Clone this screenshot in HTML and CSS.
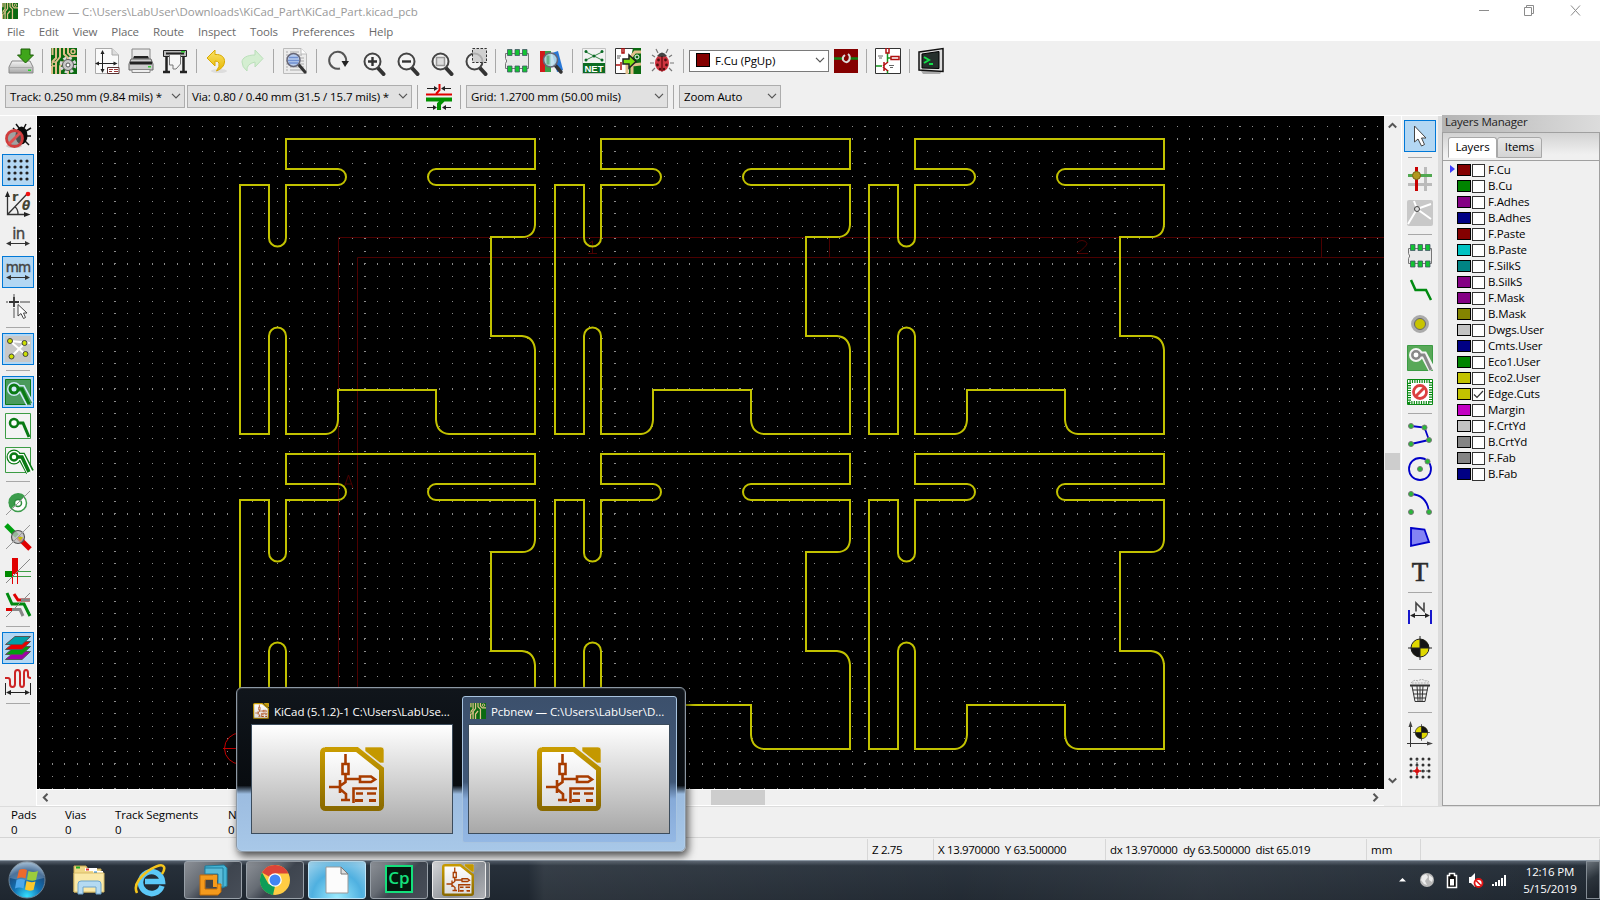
FILE: index.html
```
<!DOCTYPE html>
<html lang="en">
<head>
<meta charset="utf-8">
<title>Pcbnew</title>
<link rel="stylesheet" href="styles.css">
</head>
<body>
<svg class="defs" width="0" height="0">
  <defs>
    <linearGradient id="gold" x1="0" y1="0" x2="0" y2="1"><stop offset="0" stop-color="#c99c00"/><stop offset="1" stop-color="#8a6a00"/></linearGradient>
    <linearGradient id="paper" x1="0" y1="0" x2="0" y2="1"><stop offset="0" stop-color="#fff"/><stop offset="1" stop-color="#dcdcdc"/></linearGradient>
    <linearGradient id="metal" x1="0" y1="0" x2="0" y2="1"><stop offset="0" stop-color="#f4f4f4"/><stop offset="1" stop-color="#a8a8a8"/></linearGradient>
    <linearGradient id="yel" x1="0" y1="0" x2="0" y2="1"><stop offset="0" stop-color="#f9e26a"/><stop offset="1" stop-color="#e8b800"/></linearGradient>
    <radialGradient id="orb" cx=".5" cy=".95" r=".95"><stop offset="0" stop-color="#35e0ff"/><stop offset=".4" stop-color="#1272b4"/><stop offset=".75" stop-color="#1c4a7c"/><stop offset="1" stop-color="#8fb0cc"/></radialGradient>
    <symbol id="kicad" viewBox="0 0 64 64">
      <path d="M5 2.500H37L61.500 22V58.500a3 3 0 0 1-3 3H5.500a3 3 0 0 1-3-3V5.500a3 3 0 0 1 3-3z" fill="url(#paper)" stroke="url(#gold)" stroke-width="5"/>
      <path d="M45 0H61q3 0 3 3V16H60L45 4z" fill="#c49800" stroke="#f4f4f4" stroke-width=".6"/>
      <g fill="none" stroke="#a83c00" stroke-width="2.600"><path d="M25.500 7V16M25.500 28V35L20 39M25.500 32H40M9 40H19M20 33V46M20 42L26 47V53M21 53H30"/><path d="M22.500 17H28.500V27H22.500zM40 29.500H51L55 32.500L51 35H40z"/><path d="M33.500 56V41.500H57M36 46.500H43M47 46.500H56M36 53.500H43M50 53.500H56"/></g>
      <path d="M35 52h8v3h-8zM49 52h7v3h-7z" fill="#a83c00"/>
    </symbol>
    <symbol id="pcb" viewBox="0 0 26 26">
      <path d="M0 0H26V26H0z" fill="#0b6a12"/>
      <g fill="none" stroke="#e2c08c" stroke-width="2"><path d="M1.500 0V7M5 0V10L1 14M9 0V9L5 14V26M13 0V6L17 10V26M17 0V5L20 8H26M9 26V18L13 13M1 18V26"/></g>
      <circle cx="22" cy="3.500" r="2" fill="none" stroke="#e2c08c" stroke-width="1.500"/><circle cx="3" cy="16" r="2" fill="none" stroke="#e2c08c" stroke-width="1.500"/>
    </symbol>
    <symbol id="mag" viewBox="0 0 26 26">
      <path d="M16.500 17.500L22.500 24" stroke="#333" stroke-width="4" stroke-linecap="round"/>
      <circle cx="11.500" cy="11.500" r="8" fill="#f4f4f4" stroke="#444" stroke-width="2"/>
    </symbol>
    <symbol id="chev" viewBox="0 0 10 6"><path d="M1 .8L5 4.800L9 .8" fill="none" stroke="#555" stroke-width="1.200"/></symbol>
    <symbol id="chip" viewBox="0 0 26 26">
      <path d="M1.500 5.500H24.500V20.500H1.500V15.500Q4 13 1.500 10.500z" fill="#e9e9e9" stroke="#777"/>
      <g fill="#12c432" stroke="#456" stroke-width=".8"><path d="M3.500 1.500h4.500v6h-4.500zM11 1.500h4.500v6h-4.500zM18.500 1.500h4.500v6h-4.500zM3.500 18h4.500v6h-4.500zM11 18h4.500v6h-4.500zM18.500 18h4.500v6h-4.500z"/></g>
    </symbol>
    <symbol id="sch" viewBox="0 0 26 26">
      <path d="M.5.5H25.500V25.500H.5z" fill="#fff" stroke="#333"/>
      <g fill="none" stroke-width="1.500"><path d="M12.500 5V14M12.500 10H16M1 18H7M12.500 22V25.500" stroke="#12951c"/><path d="M11 0V5H14V0M16 8.500H24V11.500H16zM9 14V23M8 18L13 14M8 19L13 23" stroke="#b01010"/><path d="M3 8H8M4 10H7M14 17.500H19M15 19.500H18" stroke="#666" stroke-width="1"/></g>
    </symbol>
    <symbol id="fiducial" viewBox="0 0 26 26">
      <circle cx="13" cy="13" r="9" fill="#e0d800" stroke="#222"/><path d="M13 13V4a9 9 0 0 1 9 9zM13 13V22a9 9 0 0 1-9-9z" fill="#151515"/><path d="M13 1V25M1 13H25" stroke="#222"/>
    </symbol>
    <pattern id="dots" x="114" y="138" width="25" height="25" patternUnits="userSpaceOnUse"><path d="M0 0h1v1h-1zM13 0h1v1h-1zM0 13h1v1h-1zM13 13h1v1h-1z" fill="#8b8b8b"/></pattern>
    <pattern id="dotcols" x="114" y="138" width="125" height="25" patternUnits="userSpaceOnUse"><path d="M0 0h2v1h-2zM0 13h2v1h-2z" fill="#8b8b8b"/></pattern>
    <pattern id="dotrows" x="114" y="138" width="25" height="125" patternUnits="userSpaceOnUse"><path d="M0 0h1v2h-1zM13 0h1v2h-1z" fill="#8b8b8b"/></pattern>
    <path id="board" d="M286 139H535V169H436A8 8 0 0 0 436 185H535V225Q534 237 522 237H491V336H522Q534 337 535 350V434H449Q437 433 436 420V390H338V420Q337 433 326 434H286V336A8.500 8.500 0 0 0 269 336V434H240V185H269V238A8.500 8.500 0 0 0 286 238V185H338A8 8 0 0 0 338 169H286z"/>
  </defs>
</svg>

<div class="window">
  <header class="titlebar">
    <svg class="app-icon" width="16" height="16"><use href="#pcb"/></svg>
    <span class="caption">Pcbnew — C:\Users\LabUser\Downloads\KiCad_Part\KiCad_Part.kicad_pcb</span>
    <svg class="win-buttons" width="104" height="20" viewBox="0 0 104 20" fill="none" stroke="#8c8c8c"><path d="M1 10.500H11M46.500 7.500H53.500V15.500H46.500zM48.500 7V5.500H55.500V13.500H54M93 5.500L102 15.500M102 5.500L93 15.500"/></svg>
  </header>
  <nav class="menubar"><span>File</span><span>Edit</span><span>View</span><span>Place</span><span>Route</span><span>Inspect</span><span>Tools</span><span>Preferences</span><span>Help</span></nav>

  <div class="toolbar main-tools">
    <svg class="ico" viewBox="0 0 26 26"><path d="M4 13H22L25 19V25H1V19z" fill="url(#metal)" stroke="#888"/><path d="M1.500 19.500H24.500" stroke="#aaa"/><path d="M20 21.500h3v1.500h-3z" fill="#2bd22b"/><path d="M13 1H22V7H25.500L17.500 15L9.500 7H13z" fill="#3fa51a" stroke="#1d5c08"/></svg>
    <i class="sep"></i>
    <svg class="ico" viewBox="0 0 26 26"><use href="#pcb"/><circle cx="17" cy="17" r="6.500" fill="none" stroke="#d9d9d9" stroke-width="4" stroke-dasharray="2.800 2.300"/><circle cx="17" cy="17" r="5.500" fill="#c9c9c9" stroke="#555"/><circle cx="17" cy="17" r="2" fill="#fff" stroke="#555"/></svg>
    <i class="sep"></i>
    <svg class="ico" viewBox="0 0 26 26"><path d="M1.500.5H18L24.500 7V25.500H1.500z" fill="#fafafa" stroke="#aaa"/><path d="M18 .5V7H24.500" fill="#ddd" stroke="#aaa"/><path d="M2 15.500H22M8.500 3V24" stroke="#222"/><path d="M8.500 2L6.500 6H10.500zM8.500 25L6.500 21H10.500zM1 15.500L5 13.500V17.500zM23.500 15.500L19.500 13.500V17.500z" fill="#222"/><path d="M13.500 19.500H25V25.500H13.500z" fill="#fff" stroke="#533"/><path d="M15 21.500H19M20 21.500H24M15 23.500H18M20 23.500H24" stroke="#933"/></svg>
    <svg class="ico" viewBox="0 0 26 26"><path d="M4 1H22V12H4z" fill="#e8e8e8" stroke="#888"/><path d="M3 11H23L25 16V22H1V16z" fill="#ccc" stroke="#666"/><path d="M5 10.500L6 8H20L21 10.500zM2 13.500H24V16.500H2z" fill="#222"/><path d="M4 21.500H22V24.500H4z" fill="#eee" stroke="#888"/><path d="M20 18h3v1.500h-3z" fill="#3c3"/></svg>
    <svg class="ico" viewBox="0 0 26 26"><path d="M1.500 2.500H24.500V8.500H1.500z" fill="#bbb" stroke="#222"/><path d="M4 5.500H22" stroke="#222" stroke-width="2"/><path d="M4.500 9V24M21.500 9V24M1 24H8M18 24H25" stroke="#222" stroke-width="2.500"/><path d="M7.500 6.500H18.500V16L14 21H11V17H7.500z" fill="#f6f6f6" stroke="#777"/><path d="M19 3h4v1.500h-4z" fill="#3c3"/></svg>
    <i class="sep"></i>
    <svg class="ico" viewBox="0 0 26 26"><ellipse cx="14" cy="23" rx="8" ry="2" fill="#ddd"/><path d="M10 2V6.500C17 6 20 10 19.500 14Q19 20 11.500 23Q15 18 14 15Q13 13 10 13V18L2 10z" fill="url(#yel)" stroke="#d9a900"/></svg>
    <svg class="ico" viewBox="0 0 26 26" opacity=".45"><path d="M16 2V7C8 7 3 10 3 14Q3 19 8 23Q7 16 16 14V19L24 10.500z" fill="#b4ecac" stroke="#78cc78"/></svg>
    <i class="sep"></i>
    <svg class="ico" viewBox="0 0 26 26"><path d="M1.500.5H19L24.500 6V25.500H1.500z" fill="#ececec" stroke="#bbb"/><path d="M19 .5V6H24.500" fill="#fff" stroke="#bbb"/><path d="M4 4H6M8 4H17M4 7H6M8 7H20M4 10H6M8 10H22M4 13H6M8 13H22M4 16H6M8 16H22M4 19H6M8 19H22M4 22H6M8 22H20" stroke="#aaa"/><path d="M17 17L23 24" stroke="#333" stroke-width="3" stroke-linecap="round"/><circle cx="11.500" cy="12" r="6.500" fill="#b8cdee" stroke="#667" stroke-width="1.500"/><path d="M7 9.500H16M6 12.500H17M7 15H16" stroke="#6f8fd0" stroke-width="1.300"/></svg>
    <i class="sep"></i>
    <svg class="ico" viewBox="0 0 26 26"><path d="M15 20.500A8.500 8.500 0 1 1 21 14" fill="none" stroke="#555" stroke-width="2"/><path d="M16.500 13H24L20 19z" fill="#222"/></svg>
    <svg class="ico" viewBox="0 0 26 26"><use href="#mag" x="2" y="2" width="26" height="26"/><path d="M9 13.500H18M13.500 9V18" stroke="#333" stroke-width="2.400"/></svg>
    <svg class="ico" viewBox="0 0 26 26"><use href="#mag" x="2" y="2" width="26" height="26"/><path d="M9 13.500H18" stroke="#333" stroke-width="2.400"/></svg>
    <svg class="ico" viewBox="0 0 26 26"><use href="#mag" x="2" y="2" width="26" height="26"/><path d="M9.500 9.500H17.500V17.500H9.500z" fill="#ddd" stroke="#999" stroke-width="1.500"/></svg>
    <svg class="ico" viewBox="0 0 26 26"><use href="#mag" x="2" y="2" width="26" height="26"/><path d="M11.500.5H25.500V14.500H11.500z" fill="#c8c8c8" fill-opacity=".8" stroke="#333" stroke-dasharray="2.500 1.500"/></svg>
    <i class="sep"></i>
    <svg class="ico" viewBox="0 0 26 26"><use href="#chip"/></svg>
    <svg class="ico" viewBox="0 0 26 26"><path d="M2 3H7V24H2z" fill="#d21a1a"/><path d="M7 3H13V24H7z" fill="#3ba14a"/><path d="M14 5L20 3L25 22L19 24z" fill="#2878d8"/><path d="M17 17L23 24" stroke="#333" stroke-width="3.500" stroke-linecap="round"/><circle cx="12.500" cy="12" r="7" fill="#bde0ee" fill-opacity=".85" stroke="#667" stroke-width="1.600"/><path d="M10 7.500V16.500" stroke="#6ab08c" stroke-width="3"/></svg>
    <i class="sep"></i>
    <svg class="ico" viewBox="0 0 26 26"><path d="M1.500.5H24.500V25.500H1.500z" fill="#f2f2f2" stroke="#c4c4c4"/><path d="M5 4L21 12M21 4L5 12" stroke="#3b8a4a"/><g fill="#0b6a26"><circle cx="5" cy="3.500" r="1.500"/><circle cx="21" cy="3.500" r="1.500"/><circle cx="13" cy="8" r="1.500"/><circle cx="5" cy="12" r="1.500"/><circle cx="21" cy="12" r="1.500"/></g><path d="M2 15H24V25H2z" fill="#0d6b22"/><text x="13" y="23.500" class="net">NET</text></svg>
    <svg class="ico" viewBox="0 0 26 26"><path d="M.5.5H25.500V25.500H.5z" fill="#fff" stroke="#333"/><path d="M18 0H26V26H14V18z" fill="#0b6a12"/><path d="M12 26V14L20 4H26M17 26V17L26 16" fill="none" stroke="#e2c08c" stroke-width="3"/><circle cx="22" cy="9" r="2" fill="none" stroke="#fff"/><path d="M7 0V5H9V0M6 14V22M1 17H5" fill="none" stroke="#b01010" stroke-width="1.500"/><path d="M2 8H6M2 10H5" stroke="#555"/><path d="M8 11H14V7L21 13.500L14 20V16H8z" fill="#7ae010" stroke="#222" stroke-width="1.500"/></svg>
    <svg class="ico" viewBox="0 0 26 26"><path d="M9 5L7 1M17 5L19 1M6 9L3 7M20 9L23 7M5 15H1M21 15H25M6 20L3 23M20 20L23 23" stroke="#777" stroke-width="1.200"/><ellipse cx="13" cy="15" rx="7" ry="8.500" fill="#d03440"/><path d="M8 8Q13 1 18 8Q13 10 8 8z" fill="#444"/><path d="M13 8V23.500" stroke="#400"/><g fill="#501010"><circle cx="9.500" cy="12" r="1.400"/><circle cx="16.500" cy="12" r="1.400"/><circle cx="8.500" cy="17" r="1.400"/><circle cx="17.500" cy="17" r="1.400"/><circle cx="11" cy="21" r="1.200"/><circle cx="15" cy="21" r="1.200"/></g></svg>
    <i class="sep"></i>
    <div class="combo layer-combo"><b class="swatch big"></b><span>F.Cu (PgUp)</span><svg class="chev"><use href="#chev"/></svg></div>
    <svg class="ico" viewBox="0 0 26 26"><path d="M1 1H25V25H1z" fill="#850000"/><path d="M1 10.500H10M17 10.500H25" stroke="#128012" stroke-width="2.500"/><path d="M12 7Q9 9 10 12Q13 16 16 12.500Q18 8 15 6" fill="none" stroke="#ddd" stroke-width="2"/></svg>
    <i class="sep tight"></i>
    <svg class="ico" viewBox="0 0 26 26"><use href="#sch"/></svg>
    <i class="sep"></i>
    <svg class="ico" viewBox="0 0 26 26"><path d="M3 23H24L22 26H5z" fill="#aaa"/><path d="M1 4L25 .5V23.500L1 22z" fill="#ddd" stroke="#111" stroke-width="1.500"/><path d="M4 6L21 3.500V20.500L4 20z" fill="#26302c" stroke="#000"/><path d="M6 9L11 12L6 15M11 16H15" fill="none" stroke="#14e04a" stroke-width="2"/></svg>
  </div>

  <div class="toolbar option-tools">
    <div class="combo track"><span>Track: 0.250 mm (9.84 mils) *</span><svg class="chev"><use href="#chev"/></svg></div>
    <div class="combo via"><span>Via: 0.80 / 0.40 mm (31.5 / 15.7 mils) *</span><svg class="chev"><use href="#chev"/></svg></div>
    <i class="sep"></i>
    <svg class="ico" viewBox="0 0 26 26"><path d="M0 10.500H26" stroke="#e00000" stroke-width="2"/><path d="M13.500 0V6L10 10" fill="none" stroke="#e00000" stroke-width="2"/><path d="M0 15.500H26" stroke="#009000" stroke-width="4"/><path d="M17 16L13 20V26" fill="none" stroke="#009000" stroke-width="4"/><path d="M1 4.500H10M17 4.500H25M1 23.500H10M17 23.500H25" stroke="#222"/><path d="M12 4.500L8 2V7zM15 4.500L19 2V7zM11 23.500L7 21V26zM16 23.500L20 21V26z" fill="#222"/></svg>
    <i class="sep"></i>
    <div class="combo grid-size"><span>Grid: 1.2700 mm (50.00 mils)</span><svg class="chev"><use href="#chev"/></svg></div>
    <i class="sep"></i>
    <div class="combo zoom-level"><span>Zoom Auto</span><svg class="chev"><use href="#chev"/></svg></div>
  </div>

  <main class="workspace">
    <aside class="side left">
      <div class="tool"><svg class="ico" viewBox="0 0 26 26"><path d="M14 5L11 1M19 5L21 1M21 8L26 5M22 13H26M20 18L24 22M11 8L8 5" stroke="#111" stroke-width="1.500"/><ellipse cx="16.500" cy="12.500" rx="6" ry="9" fill="#080808"/><ellipse cx="9" cy="23" rx="8" ry="2" fill="#ccc"/><circle cx="9.500" cy="15.500" r="8" fill="#777" fill-opacity=".65" stroke="#d03c3c" stroke-width="2.800"/><path d="M15 10L4 21" stroke="#e05050" stroke-width="2.800"/></svg></div>
      <div class="tool on"><svg class="ico" viewBox="0 0 26 26"><path d="M4 4H23M4 10H23M4 16H23M4 22H23" stroke="#222" stroke-width="3.200" stroke-linecap="round" stroke-dasharray="0 6"/></svg></div>
      <div class="tool"><svg class="ico" viewBox="0 0 26 26"><path d="M2.500 4V23.500H22M3 23L22 3M10 16Q13 18 13 23" fill="none" stroke="#333" stroke-width="1.300"/><path d="M2.500 0L0 6H5zM25.500 23.500L19 21V26z" fill="#222"/><circle cx="23" cy="3" r="2.300" fill="#f01010"/><text x="7" y="10" class="glyph">r</text><text x="17" y="19" class="glyph it">θ</text></svg></div>
      <div class="tool"><svg class="ico" viewBox="0 0 26 26"><text x="13.500" y="13.500" class="unit">in</text><path d="M3 18.500H23" stroke="#333"/><path d="M1 18.500L6 16V21zM25 18.500L20 16V21z" fill="#333"/></svg></div>
      <div class="tool on"><svg class="ico" viewBox="0 0 26 26"><text x="13" y="13" class="unit mm">mm</text><path d="M3 18.500H23" stroke="#333"/><path d="M1 18.500L6 16V21zM25 18.500L20 16V21z" fill="#333"/></svg></div>
      <div class="tool"><svg class="ico" viewBox="0 0 26 26"><path d="M1 9H3M15 9H25M9 1V4M9 15V25" stroke="#999" stroke-width="1.800"/><path d="M4 9H14M9 4V14" stroke="#333" stroke-width="1.800"/><path d="M13 11.500V23L16 20.500L18.500 25.500L20.500 24.500L18.500 20H22z" fill="#fff" stroke="#444"/></svg></div>
      <i class="hsep"></i>
      <div class="tool on"><svg class="ico" viewBox="0 0 26 26"><path d="M0 0H26V26H0z" fill="#c8c8c8"/><path d="M5 5L20 18M20 7L7 20M5 5L25 7" stroke="#fff" stroke-width="2"/><g fill="#cde000" stroke="#444"><circle cx="5" cy="5" r="2.500"/><circle cx="19.500" cy="7" r="2.500"/><circle cx="20.500" cy="18" r="2.500"/><circle cx="6.500" cy="20.500" r="2.500"/></g></svg></div>
      <i class="hsep"></i>
      <div class="tool on"><svg class="ico" viewBox="0 0 26 26"><path d="M.5.5H25.500V25.500H.5z" fill="#4a9a5c" stroke="#0a7a14"/><path d="M9 10H17L25 25" fill="none" stroke="#cfe8f8" stroke-width="8"/><circle cx="9" cy="10" r="7" fill="#cfe8f8"/><path d="M9 10H17L25 25" fill="none" stroke="#4a9a5c" stroke-width="5"/><circle cx="9" cy="10" r="5.500" fill="#0a7a14"/><path d="M9 10H17L24 25" fill="none" stroke="#0a7a14" stroke-width="3"/><circle cx="9" cy="10" r="2.500" fill="#cfe8f8"/></svg></div>
      <div class="tool"><svg class="ico" viewBox="0 0 26 26"><path d="M.5.500H25.500V25.500H.5z" fill="#f4f4f4" stroke="#3c9c44"/><path d="M9 10H18L24 24" fill="none" stroke="#0a7a14" stroke-width="3"/><circle cx="9" cy="10" r="4" fill="#fff" stroke="#0a7a14" stroke-width="2.500"/></svg></div>
      <div class="tool"><svg class="ico" viewBox="0 0 26 26"><path d="M.5.500H25.500V25.500H.5z" fill="#f4f4f4" stroke="#3c9c44"/><path d="M9 10H17L25 25" fill="none" stroke="#0a7a14" stroke-width="8.500"/><circle cx="9" cy="10" r="7.500" fill="#0a7a14"/><path d="M9 10H17L25 26" fill="none" stroke="#fff" stroke-width="6"/><circle cx="9" cy="10" r="6.300" fill="#fff"/><path d="M9 10H17L24 25" fill="none" stroke="#0a7a14" stroke-width="3.500"/><circle cx="9" cy="10" r="3.500" fill="#fff" stroke="#0a7a14" stroke-width="2.500"/></svg></div>
      <i class="hsep"></i>
      <div class="tool"><svg class="ico" viewBox="0 0 26 26"><circle cx="13" cy="13" r="8.500" fill="#fff" stroke="#3c9c4c" stroke-width="1.500"/><path d="M6 19A9 9 0 0 1 20 6z" fill="#3c9c4c"/><circle cx="13" cy="13" r="3.500" fill="#fff" stroke="#2c8c3c" stroke-width="1.500"/><path d="M1 25L25 1" stroke="#999"/></svg></div>
      <div class="tool"><svg class="ico" viewBox="0 0 26 26"><path d="M1 1L12 12" stroke="#00a010" stroke-width="5"/><path d="M13 13L25 25" stroke="#e00000" stroke-width="5"/><circle cx="13" cy="13" r="6.500" fill="#bbb" fill-opacity=".8" stroke="#555" stroke-width="1.200"/><path d="M13 13H18L15 17z" fill="#c8c000"/><path d="M1 25L25 1" stroke="#999"/></svg></div>
      <div class="tool"><svg class="ico" viewBox="0 0 26 26"><path d="M0 13.500H26M0 18.500H26" stroke="#3c9c44"/><path d="M0 16H8" stroke="#008a00" stroke-width="6"/><path d="M10 0V16" stroke="#e00000" stroke-width="6"/><path d="M7.500 13V26M12.500 13V26" stroke="#e00000"/><path d="M1 25L25 1" stroke="#888"/></svg></div>
      <div class="tool"><svg class="ico" viewBox="0 0 26 26"><path d="M9 2L13 8H25" fill="none" stroke="#e00000" stroke-width="3"/><path d="M16 8H25" stroke="#888" stroke-width="3"/><path d="M1 17.500H15L18 24" fill="none" stroke="#888" stroke-width="3"/><path d="M1 17.500H7" stroke="#e00000" stroke-width="3"/><path d="M2 1L7 12H19L25 24" fill="none" stroke="#008a10" stroke-width="3"/><path d="M1 25L25 1" stroke="#888"/></svg></div>
      <i class="hsep"></i>
      <div class="tool on"><svg class="ico" viewBox="0 0 26 26"><g stroke="#555"><path d="M10 16.500H25.500L17 24.500H.5z" fill="#a000a8"/><path d="M10 11.500H25.500L17 19.500H.5z" fill="#00a010"/><path d="M10 6.500H25.500L17 14.500H.5z" fill="#e80000"/><path d="M10 1.500H25.500L17 9.500H.5z" fill="#00a0a8"/></g></svg></div>
      <div class="tool"><svg class="ico" viewBox="0 0 26 26"><path d="M0 9H3Q5 9 5 12V15Q5 18 7.500 18T10 15V4Q10 1 12.500 1T15 4V15Q15 18 17 18T19 15V4Q19 1 21 1T23 4V7Q23 9 26 9" fill="none" stroke="#cc2424" stroke-width="2"/><path d="M.5 14V26M25.500 14V26M3 23.500H23" stroke="#222"/><path d="M1 23.500L6 21V26zM25 23.500L20 21V26z" fill="#222"/></svg></div>
      <i class="hsep"></i>
    </aside>

    <section class="center">
      <svg class="canvas" width="1347" height="673" viewBox="37 116 1347 673">
        <rect x="37" y="116" width="1347" height="673" fill="#000"/>
        <rect x="37" y="116" width="1347" height="673" fill="url(#dots)"/>
        <rect x="37" y="116" width="1347" height="673" fill="url(#dotcols)"/>
        <rect x="37" y="116" width="1347" height="673" fill="url(#dotrows)"/>
        <g fill="none" stroke="#4c0000">
          <path d="M1384 237.500H338.500V789M1384 257.500H357.500V789M829.500 238V257M1321.500 238V257"/>
          <path d="M588 253.500H597M592.500 253V241L588.500 244M1077 243Q1078 240.500 1082 240.500T1087 243.500Q1087 246 1077 253.500H1088M344 488L348.500 475L353 488M345.500 484H351.500"/>
        </g>
        <circle cx="240" cy="748.500" r="15.500" fill="none" stroke="#c40000"/><path d="M223 748.500H257" stroke="#c40000"/>
        <g fill="none" stroke="#c2c200" stroke-width="2">
          <use href="#board"/><use href="#board" x="315"/><use href="#board" x="629"/>
          <use href="#board" y="315"/><use href="#board" x="315" y="315"/><use href="#board" x="629" y="315"/>
        </g>
      </svg>
      <div class="hscroll"><svg width="7" height="9" viewBox="0 0 7 9"><path d="M5.500.8L1.800 4.500L5.500 8.200" fill="none" stroke="#555" stroke-width="2"/></svg><i class="hthumb"></i><svg width="7" height="9" viewBox="0 0 7 9"><path d="M1.500.8L5.200 4.500L1.500 8.200" fill="none" stroke="#555" stroke-width="2"/></svg></div>
    </section>
    <div class="vscroll"><svg width="9" height="7" viewBox="0 0 9 7"><path d="M.8 5.500L4.500 1.800L8.200 5.500" fill="none" stroke="#555" stroke-width="2"/></svg><i class="vthumb"></i><svg width="9" height="7" viewBox="0 0 9 7"><path d="M.8 1.500L4.500 5.200L8.200 1.500" fill="none" stroke="#555" stroke-width="2"/></svg></div>

    <aside class="side right">
      <div class="tool on"><svg class="ico" viewBox="0 0 26 26"><path d="M7.500 3V19L11 16L14.500 23L17.500 21.500L14.500 15H19z" fill="#fff" stroke="#444"/></svg></div>
      <i class="hsep"></i>
      <div class="tool"><svg class="ico" viewBox="0 0 26 26"><path d="M18.500 1V25M1 18.500H25" stroke="#bbb" stroke-width="3"/><path d="M9.500 1V25" stroke="#c80000" stroke-width="3"/><path d="M1 9.500H25" stroke="#50a850" stroke-width="3"/><circle cx="9.500" cy="9.500" r="4" fill="#b09820" stroke="#776618"/></svg></div>
      <div class="tool"><svg class="ico" viewBox="0 0 26 26"><rect width="26" height="26" rx="2" fill="#c8c8c8"/><path d="M10 9L7 1M10 9L24 4M10 9L24 19M10 9L1 24" stroke="#fff" stroke-width="2"/><circle cx="10" cy="9" r="2.500" fill="#ddd" stroke="#444"/></svg></div>
      <i class="hsep"></i>
      <div class="tool"><svg class="ico" viewBox="0 0 26 26"><use href="#chip"/></svg></div>
      <div class="tool"><svg class="ico" viewBox="0 0 26 26"><path d="M4 3L8.500 13H19L24 23" fill="none" stroke="#008a10" stroke-width="2.500"/></svg></div>
      <div class="tool"><svg class="ico" viewBox="0 0 26 26"><circle cx="13" cy="13" r="7.200" fill="#c8c400" stroke="#aaa" stroke-width="3.500"/><circle cx="13" cy="13" r="5.500" fill="none" stroke="#666"/></svg></div>
      <div class="tool"><svg class="ico" viewBox="0 0 26 26"><path d="M.5.500H25.500V25.500H.5z" fill="#58a858" stroke="#3c9c44"/><path d="M9 10H17L25 25" fill="none" stroke="#f4f4f4" stroke-width="7"/><circle cx="9" cy="10" r="7" fill="#f4f4f4"/><path d="M9 10H17L24 25" fill="none" stroke="#888" stroke-width="3"/><circle cx="9" cy="10" r="3.700" fill="#fff" stroke="#888" stroke-width="2.500"/></svg></div>
      <div class="tool"><svg class="ico" viewBox="0 0 26 26"><path d="M.5.500H25.500V25.500H.5z" fill="#fff" stroke="#0a8a14"/><path d="M2.500 2.500H23.500V23.500H2.500z" fill="none" stroke="#0a8a14" stroke-width="3" stroke-dasharray="1.200 1.200"/><path d="M5 5H21V21H5z" fill="#fff"/><circle cx="13" cy="13" r="6.500" fill="#fff" stroke="#dc4040" stroke-width="2.800"/><path d="M17.500 8.500L8.500 17.500" stroke="#dc4040" stroke-width="2.800"/></svg></div>
      <i class="hsep"></i>
      <div class="tool"><svg class="ico" viewBox="0 0 26 26"><path d="M4 4L17.500 5.500L22 18L4 22" fill="none" stroke="#0000c8" stroke-width="1.800"/><g fill="#28b838" stroke="#777"><circle cx="4" cy="4" r="2.500"/><circle cx="17.500" cy="5.500" r="2.500"/><circle cx="22" cy="18" r="2.500"/><circle cx="4" cy="22" r="2.500"/></g></svg></div>
      <div class="tool"><svg class="ico" viewBox="0 0 26 26"><circle cx="13" cy="13" r="11" fill="none" stroke="#0000c8" stroke-width="1.800"/><g fill="#28b838" stroke="#777"><circle cx="13" cy="13" r="2.500"/><circle cx="20.500" cy="5.500" r="2.500"/></g></svg></div>
      <div class="tool"><svg class="ico" viewBox="0 0 26 26"><path d="M4 4Q20 5 22 22" fill="none" stroke="#0000c8" stroke-width="1.800"/><g fill="#28b838" stroke="#777"><circle cx="4" cy="4" r="2.500"/><circle cx="22" cy="22" r="2.500"/><circle cx="4" cy="22" r="2.500"/></g></svg></div>
      <div class="tool"><svg class="ico" viewBox="0 0 26 26"><path d="M4 4L17.500 5.500L22 18L4 22z" fill="#8484f4" stroke="#0000c8" stroke-width="1.800"/></svg></div>
      <div class="tool"><svg class="ico" viewBox="0 0 26 26"><text x="13" y="22.500" class="serif-t">T</text></svg></div>
      <i class="hsep"></i>
      <div class="tool"><svg class="ico" viewBox="0 0 26 26"><path d="M9 10.500V2L17 10V1.500" fill="none" stroke="#444" stroke-width="1.600"/><path d="M2 9V23M24 9V23" stroke="#0000c8" stroke-width="1.800"/><path d="M4 14.500H22" stroke="#222"/><path d="M3 14.500L8 12V17zM23 14.500L18 12V17z" fill="#222"/></svg></div>
      <div class="tool"><svg class="ico" viewBox="0 0 26 26"><use href="#fiducial"/></svg></div>
      <i class="hsep"></i>
      <div class="tool"><svg class="ico" viewBox="0 0 26 26"><path d="M4 5Q7 1 11 3Q15 0 18 3Q22 2 22 5z" fill="#eee" stroke="#aaa" stroke-dasharray="2 1"/><path d="M3 7.500H23" stroke="#333" stroke-width="2"/><path d="M5 8L8 23.500H18L21 8M5.500 12H20.500M6.500 16H19.500M7 20H19M10 8L11 23M16 8L15 23M13 8V23" fill="none" stroke="#333"/></svg></div>
      <i class="hsep"></i>
      <div class="tool"><svg class="ico" viewBox="0 0 26 26"><path d="M3.500 4V26M0 22.500H22" stroke="#333"/><path d="M3.500 0L1.500 6H5.500zM26 22.500L20 20.500V24.500z" fill="#444"/><use href="#fiducial" x="5.500" y="2.500" width="18" height="18"/></svg></div>
      <div class="tool"><svg class="ico" viewBox="0 0 26 26"><path d="M4 4H23M4 10H23M4 16H23M4 22H23" stroke="#333" stroke-width="3" stroke-linecap="round" stroke-dasharray="0 6"/><path d="M10 4V22M4 16H22" stroke="#555" stroke-dasharray="2 1"/><path d="M6 16H14M10 12V20" stroke="#d81010" stroke-width="1.500"/><circle cx="10" cy="16" r="2.200" fill="#d81010"/></svg></div>
    </aside>

    <aside class="layers-panel">
      <h2>Layers Manager</h2>
      <div class="panel-body">
        <div class="tabs"><span class="tab active">Layers</span><span class="tab">Items</span></div>
        <ul class="layers">
          <li class="current"><b class="swatch c-red"></b><i class="check"></i>F.Cu</li>
          <li><b class="swatch c-green"></b><i class="check"></i>B.Cu</li>
          <li><b class="swatch c-purple"></b><i class="check"></i>F.Adhes</li>
          <li><b class="swatch c-navy"></b><i class="check"></i>B.Adhes</li>
          <li><b class="swatch c-red"></b><i class="check"></i>F.Paste</li>
          <li><b class="swatch c-cyan"></b><i class="check"></i>B.Paste</li>
          <li><b class="swatch c-teal"></b><i class="check"></i>F.SilkS</li>
          <li><b class="swatch c-purple"></b><i class="check"></i>B.SilkS</li>
          <li><b class="swatch c-purple"></b><i class="check"></i>F.Mask</li>
          <li><b class="swatch c-olive"></b><i class="check"></i>B.Mask</li>
          <li><b class="swatch c-silver"></b><i class="check"></i>Dwgs.User</li>
          <li><b class="swatch c-navy"></b><i class="check"></i>Cmts.User</li>
          <li><b class="swatch c-green"></b><i class="check"></i>Eco1.User</li>
          <li><b class="swatch c-yellow"></b><i class="check"></i>Eco2.User</li>
          <li><b class="swatch c-yellow"></b><i class="check"><svg width="11" height="11" viewBox="0 0 11 11"><path d="M1 5.500L4 8.500L10 2" fill="none" stroke="#333" stroke-width="1.200"/></svg></i>Edge.Cuts</li>
          <li><b class="swatch c-magenta"></b><i class="check"></i>Margin</li>
          <li><b class="swatch c-silver"></b><i class="check"></i>F.CrtYd</li>
          <li><b class="swatch c-gray"></b><i class="check"></i>B.CrtYd</li>
          <li><b class="swatch c-gray"></b><i class="check"></i>F.Fab</li>
          <li><b class="swatch c-navy"></b><i class="check"></i>B.Fab</li>
        </ul>
      </div>
    </aside>
  </main>

  <div class="message-panel">
    <div class="msg pads"><span>Pads</span><span>0</span></div>
    <div class="msg vias"><span>Vias</span><span>0</span></div>
    <div class="msg segs"><span>Track Segments</span><span>0</span></div>
    <div class="msg"><span>Nodes</span><span>0</span></div>
  </div>
  <footer class="statusbar"><span class="s0"></span><span class="s1">Z 2.75</span><span class="s2">X 13.970000&nbsp; Y 63.500000</span><span class="s3">dx 13.970000&nbsp; dy 63.500000&nbsp; dist 65.019</span><span class="s4">mm</span><span class="s5"></span></footer>

  <div class="taskbar">
    <svg class="start" width="38" height="38" viewBox="0 0 38 38"><circle cx="19" cy="19" r="18" fill="url(#orb)" stroke="#6c8498"/><path d="M2 17A17 17 0 0 1 36 17Q19 22 2 17z" fill="#fff" fill-opacity=".22"/><path d="M11 9Q15 7 19 9L17.500 17.500Q13 15.500 9 17.500z" fill="#ee6a2c"/><path d="M20.500 10Q25 12 30 10L28 19Q23.500 20.500 19 18.500z" fill="#9ccc3c"/><path d="M8.500 19Q13 17 17 19L15.500 27.500Q11 25.500 7 27.500z" fill="#4ca8ec"/><path d="M18.500 20Q23 22 27.500 20.500L25.500 29Q21 30.500 17 28.500z" fill="#fcc82c"/></svg>
    <div class="pin"><svg width="34" height="32" viewBox="0 0 34 32"><path d="M2 2H14L16 5H29V28H2z" fill="#f0d888" stroke="#c8a850"/><path d="M4 2.500h4v2h-4z" fill="#2a2"/><path d="M13 4H25V7H13z" fill="#fff"/><path d="M14 4.500h3v2h-3z" fill="#d33"/><path d="M21 7H31V10H21z" fill="#fff"/><path d="M22 7.500h3v2h-3z" fill="#28d"/><path d="M2 9H32V28H2z" fill="#fae9a8" stroke="#d8bc68"/><path d="M6 30V20Q6 17 9 17H26Q29 17 29 20V30H24V23H11V30z" fill="#b4daf2" stroke="#6ca4cc"/></svg></div>
    <div class="pin"><svg width="34" height="34" viewBox="0 0 34 34"><path d="M28 23A11 11 0 1 1 28.500 18.500H11" fill="none" stroke="#5cc8f8" stroke-width="5.500"/><path d="M3 30Q-2 20 14 8Q28-1 30 4Q31 7 28 11" fill="none" stroke="#f4c41c" stroke-width="2.600"/></svg></div>
    <div class="task"><svg width="30" height="32" viewBox="0 0 30 32"><path d="M7 2L26 1L29 4V22L24 24V6H7z" fill="#46b4d4" stroke="#1e7c9c"/><path d="M7 4H25V23H20V10H7z" fill="#5cbcd8" stroke="#1e7c9c"/><path d="M2 11H19V16H7V25H19V20H23V28L20 31H2z" fill="#f49a1c" stroke="#c06c08"/><path d="M8 16H15V23H8z" fill="#444"/><path d="M15 11H19V23H15z" fill="#f49a1c"/></svg></div>
    <div class="task"><svg width="32" height="32" viewBox="0 0 32 32"><circle cx="16" cy="16" r="15" fill="#fc4"/><path d="M16 16L3 8.500A15 15 0 0 1 29.500 9.500H16z" fill="#dc4437"/><path d="M3 8.500L9.500 20L16 22L14 31A15 15 0 0 1 3 8.500z" fill="#0f9d58"/><circle cx="16" cy="16" r="6.800" fill="#fff"/><circle cx="16" cy="16" r="5.500" fill="#4285f4"/></svg></div>
    <div class="task active"><svg width="24" height="28" viewBox="0 0 24 28"><path d="M1 1H16L23 8V27H1z" fill="#fcfcfc" stroke="#999"/><path d="M16 1V8H23z" fill="#ddd" stroke="#777"/></svg></div>
    <div class="task"><div class="captivate">Cp</div></div>
    <div class="task kicad stacked"><svg width="32" height="32"><use href="#kicad"/></svg></div>
    <div class="tray">
      <svg width="108" height="18" viewBox="0 0 108 18"><path d="M1 10.500L4.500 7L8 10.500z" fill="#fff"/><circle cx="29" cy="9" r="7" fill="#b8b8b8"/><path d="M24 5L28 3L30 6L27 10L29 14L26 13L23 9zM31 4L35 7L34 11L31 9z" fill="#ececec"/><path d="M51.500 2.500H56.500V4.500H58.500V16.500H49.500V4.500H51.500z" fill="#111" stroke="#fff" stroke-width="1.500"/><path d="M52 8H56V14.500H52z" fill="#fff"/><path d="M71 6H73L77 2V16L73 12H71z" fill="#fff"/><circle cx="80.500" cy="12" r="4" fill="#fff" stroke="#e01414" stroke-width="1.800"/><path d="M78 9.500L83 14.500" stroke="#e01414" stroke-width="1.600"/><path d="M94 13h2v2h-2zM97 11h2v4h-2zM100 9h2v6h-2zM103 7h2v8h-2zM106 4h2v11h-2z" fill="#fff"/></svg>
      <div class="clock"><span>12:16 PM</span><span>5/15/2019</span></div>
      <i class="show-desktop"></i>
    </div>
  </div>

  <div class="peek">
    <div class="thumb"><div class="thumb-title"><svg width="16" height="16"><use href="#kicad"/></svg><span>KiCad (5.1.2)-1 C:\Users\LabUse...</span></div><div class="thumb-view"><svg width="64" height="64"><use href="#kicad"/></svg></div></div>
    <div class="thumb hover"><div class="thumb-title"><svg width="16" height="16"><use href="#pcb"/></svg><span>Pcbnew — C:\Users\LabUser\D...</span></div><div class="thumb-view"><svg width="64" height="64"><use href="#kicad"/></svg></div></div>
  </div>
</div>
</body>
</html>
```
FILE: styles.css
```
* { box-sizing: border-box; }
body { margin: 0; background: #fff; font-family: "Open Sans", "Noto Sans", sans-serif; font-size: 11.5px; letter-spacing: -0.12px; color: #000; overflow: hidden; }
svg { display: block; flex: none; }
.defs { position: absolute; }
.window { position: relative; width: 1600px; height: 900px; display: flex; flex-direction: column; background: #f0f0f0; }
span { white-space: nowrap; }

.titlebar { height: 24px; background: #fff; display: flex; align-items: center; padding: 0 0 2px 2px; color: #999; }
.caption { margin-left: 5px; flex: 1; letter-spacing: -0.03px; }
.win-buttons { margin-right: 18px; margin-top: -2px; }
.menubar { height: 17px; background: #fff; display: flex; gap: 14px; padding-left: 7px; line-height: 16px; color: #6a6a6a; }

.toolbar { display: flex; align-items: center; }
.main-tools { height: 40px; gap: 8px; padding-left: 8px; }
.option-tools { height: 34px; padding: 0 0 3px 5px; }
.ico { width: 26px; height: 26px; flex: none; overflow: visible; }
.sep { width: 1px; height: 24px; background: #a8a8a8; flex: none; }
.sep.tight { margin-left: -1px; }
.combo { height: 23px; border: 1px solid #adadad; background: #e1e1e1; display: flex; align-items: center; justify-content: space-between; padding: 0 3px 1px 4px; flex: none; }
.chev { width: 10px; height: 6px; }
.layer-combo { width: 140px; height: 22px; background: #fff; border-color: #7a7a7a; margin: -1px -4px 0 -3px; padding: 0 3px 1px 6px; }
.layer-combo span { flex: 1; margin-left: 5px; }
.track { width: 180px; margin-right: 2px; }
.via { width: 225px; margin-right: 5px; }
.option-tools .ico { margin: 0 8px; }
.grid-size { width: 202px; margin: 0 5px; }
.zoom-level { width: 102px; margin-left: 5px; }
.net { font: bold 9.5px "Liberation Sans", sans-serif; fill: #fff; text-anchor: middle; letter-spacing: 0; }
.glyph { font: bold 13px "DejaVu Sans", sans-serif; fill: #443; }
.glyph.it { font-style: italic; font-size: 12px; }
.unit { font: 15px "DejaVu Sans", sans-serif; fill: #444; stroke: #444; stroke-width: .4px; text-anchor: middle; letter-spacing: -0.5px; }
.unit.mm { font-size: 13.5px; letter-spacing: -1px; }
.serif-t { font: 27px "Liberation Serif", serif; fill: #2c2c2c; stroke: #2c2c2c; stroke-width: .6px; text-anchor: middle; }

.workspace { height: 691px; display: flex; border-top: 1px solid #fff; }
.side { display: flex; flex-direction: column; align-items: center; padding-top: 3px; flex: none; }
.left { width: 37px; padding-right: 1px; border-right: 1px solid #fff; }
.right { width: 37px; border-left: 1px solid #fff; }
.tool { width: 32px; height: 32px; margin: 1px 0; display: flex; align-items: center; justify-content: center; flex: none; border: 1px solid transparent; }
.tool.on { background: #b3d7f3; border-color: #0078d7; }
.hsep { width: 24px; height: 1px; margin: 4px 0; background: #a8a8a8; flex: none; }
.center { width: 1347px; flex: none; }
.hscroll { height: 17px; display: flex; align-items: center; padding: 0 5px; border-bottom: 1px solid #fff; border-top: 1px solid #fff; }
.hthumb { width: 54px; height: 15px; margin-left: 662px; margin-right: auto; background: #cdcdcd; }
.vscroll { width: 17px; flex: none; display: flex; flex-direction: column; align-items: center; padding: 6px 0 22px; }
.vthumb { width: 15px; height: 17px; background: #cdcdcd; margin-top: 324px; margin-bottom: auto; }

.layers-panel { flex: 1; border-left: 4px solid #dcdcdc; display: flex; flex-direction: column; }
.layers-panel h2 { margin: -1px 0 0; height: 17px; padding-left: 3px; font-size: 11.5px; line-height: 14px; font-weight: 400; letter-spacing: -0.2px; color: #222; background: linear-gradient(90deg, #b4b4b4, #dcdcdc); }
.panel-body { flex: 1; border: 1px solid #a0a0a0; }
.tabs { height: 28px; padding: 4px 0 0 5px; display: flex; background: linear-gradient(#d2d2d2, #f0f0f0 80%); border-bottom: 1px solid #a0a0a0; }
.tab { height: 21px; width: 45px; border: 1px solid #a8a8a8; border-radius: 3px 3px 0 0; text-align: center; line-height: 18px; background: linear-gradient(#e8e8e8, #d4d4d4); }
.tab.active { width: 49px; background: #fff; border-bottom-color: #fff; }
.layers { list-style: none; margin: 0; padding: 2px 0 0 14px; }
.layers li { height: 16px; display: flex; align-items: center; gap: 1px; line-height: 14px; padding-bottom: 2px; position: relative; }
.current::before { content: ""; position: absolute; left: -7px; top: 2px; border: 4.500px solid transparent; border-left: 5px solid #3c3cff; border-right: 0; }
.swatch { width: 14px; height: 12px; border: 1px solid #000; flex: none; }
.swatch.big { width: 14px; height: 14px; background: #840000; }
.check { width: 13px; height: 13px; background: #fff; border: 1px solid #333; margin-right: 2px; flex: none; }
.c-red { background: #840000; }
.c-green { background: #008400; }
.c-purple { background: #840084; }
.c-navy { background: #000084; }
.c-cyan { background: #00c2c2; }
.c-teal { background: #008484; }
.c-olive { background: #848400; }
.c-silver { background: #c2c2c2; }
.c-yellow { background: #c2c200; }
.c-magenta { background: #c200c2; }
.c-gray { background: #848484; }

.message-panel { height: 32px; display: flex; padding: 0 0 0 11px; border-top: 1px solid #dcdcdc; border-bottom: 1px solid #d4d4d4; }
.msg { display: flex; flex-direction: column; line-height: 15px; }
.pads { width: 54px; }
.vias { width: 50px; }
.segs { width: 113px; }
.statusbar { height: 22px; display: flex; line-height: 21px; padding-top: 1px; letter-spacing: -0.34px; }
.statusbar span { border-right: 1px solid #d7d7d7; padding-left: 4px; }
.s0 { width: 868px; }
.s1 { width: 66px; }
.s2 { width: 172px; }
.s3 { width: 261px; }
.s4 { width: 54px; letter-spacing: 0; }
.s5 { flex: 1; }

.taskbar { height: 40px; display: flex; align-items: center; padding-bottom: 1px; background: linear-gradient(90deg, rgba(255,255,255,0) 0 33%, rgba(255,255,255,.07) 34%, rgba(255,255,255,.02) 60%, rgba(255,255,255,.06) 75%, rgba(255,255,255,0)), linear-gradient(#56606c, #27303a 12%, #1e262f); border-top: 1px solid #8c98a4; }
.start { margin-left: 8px; }
.pin { width: 62px; display: flex; justify-content: center; }
.start + .pin { margin-left: 12px; }
.task { width: 58px; height: 38px; border: 1px solid #98a0a8; border-radius: 3px; display: flex; align-items: center; justify-content: center; margin-right: 4px; padding-bottom: 1px; background: linear-gradient(135deg, #8c9096 0, #666c74 38%, #3e454f 55%, #484e58); }
.pin + .task { margin-left: 2px; }
.task.active { background: radial-gradient(circle at 50% 100%, #9cecff, #4fb0e0 55%, #a4d4ec); border-color: #bce4f8; }
.task.kicad { width: 54px; margin-right: 0; padding-right: 2px; background: linear-gradient(135deg, #d4d6d8, #8c9096 60%, #b0b2b6); border-color: #ececec; }
.stacked { box-shadow: 4px 0 0 -1px #70767e, 5px 0 0 -1px #aaa; }
.captivate { width: 28px; height: 28px; border: 2px solid #14e07c; background: #04180e; color: #14e07c; font-size: 17px; font-weight: 600; line-height: 22px; text-align: center; margin-top: -2px; letter-spacing: 0; }
.tray { margin-left: auto; display: flex; align-items: center; height: 100%; }
.clock { width: 66px; margin-left: 11px; display: flex; flex-direction: column; text-align: center; color: #fff; line-height: 17px; }
.show-desktop { width: 14px; height: 38px; margin-left: 3px; border: 1px solid #848c94; background: linear-gradient(150deg, #6a727a, #2c343c 45%, #1a2028); }

.peek { position: absolute; left: 236px; top: 687px; width: 450px; height: 165px; border: 1px solid #8c98a4; border-radius: 6px; background: linear-gradient(#10151b 0, #080c10 60%, #0c1218 97px, #9cbce0 106px, #a8c8e8 100%); box-shadow: 2px 4px 9px rgba(0,0,0,.7), inset 0 0 0 1px rgba(255,255,255,.12); display: flex; gap: 2px; padding: 8px; }
.thumb { width: 215px; height: 147px; padding: 6px 5px; border: 1px solid transparent; border-radius: 3px; color: #fff; }
.thumb.hover { background: linear-gradient(#3c506c, #405878 85px, #86aad8 102px, #94b8e4); border-color: #a8c4e0; }
.thumb-title { display: flex; align-items: center; gap: 5px; height: 16px; padding-left: 2px; letter-spacing: -0.05px; }
.thumb-view { margin-top: 5px; width: 202px; height: 110px; border: 1px solid #3c4c5c; background: linear-gradient(#fff, #a8a8a8); display: flex; align-items: center; justify-content: center; }
```
